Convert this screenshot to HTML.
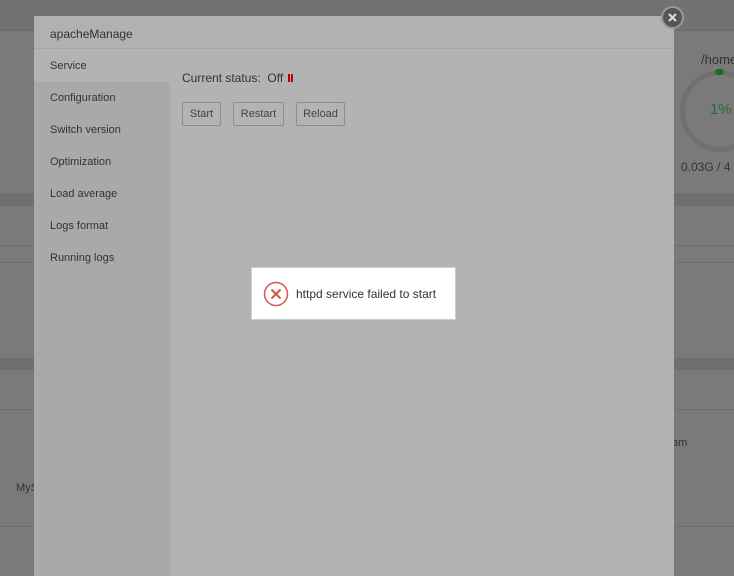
<!DOCTYPE html>
<html><head><meta charset="utf-8"><style>
*{margin:0;padding:0;box-sizing:border-box}
body{width:734px;height:568px;overflow:hidden;background:#7a7a7a;font-family:"Liberation Sans",sans-serif;position:relative}
.l{position:absolute;left:0;width:734px;height:1px;background:#6c6c6c}
.b{position:absolute;left:0;width:734px;background:#6f6f6f}
.modal{position:absolute;left:34px;top:16px;width:640px;height:560px;background:#b3b3b3}
.title{height:33px;border-bottom:1px solid #a4a4a4;font-size:12px;color:#333;padding:11px 0 0 16px;background:#b1b1b1}
.side{position:absolute;left:0;top:34px;width:136px;bottom:0;background:#a9a9a9}
.side div{height:32px;line-height:33px;padding-left:16px;font-size:11px;color:#333}
.side div.on{background:#b3b3b3}
.content{position:absolute;left:148px;top:55px;font-size:12px;color:#333}
.btn{position:absolute;top:86px;height:24px;border:1px solid #8d8d8d;border-radius:2px;font-size:11px;color:#444;line-height:22px;text-align:center}
.close{position:absolute;left:661px;top:6px;width:23px;height:23px;border-radius:50%;background:#555;border:2px solid #999}
.toast{position:absolute;left:251px;top:267px;width:205px;height:53px;background:#fff;border:1px solid #ccc}
</style></head><body>
<div class="b" style="top:0;height:30px;background:#727272"></div>
<div class="l" style="top:30px"></div>
<div class="b" style="top:193px;height:13px"></div>
<div class="l" style="top:245px"></div>
<div class="l" style="top:262px"></div>
<div class="b" style="top:358px;height:12px"></div>
<div class="l" style="top:409px"></div>
<div class="l" style="top:526px"></div>
<div style="position:absolute;left:701px;top:52px;font-size:13px;color:#333">/home</div>
<div style="position:absolute;left:680px;top:70px;width:80px;height:82px;border-radius:50%;border:5px solid #707070"></div>
<div style="position:absolute;left:715px;top:69px;width:9px;height:6px;border-radius:3px;background:#1a6e2a"></div>
<div style="position:absolute;left:710px;top:101px;font-size:15px;color:#1e6e2e">1%</div>
<div style="position:absolute;left:681px;top:160px;font-size:12px;color:#333">0.03G / 4</div>
<div style="position:absolute;left:672px;top:437px;font-size:11px;color:#333">am</div>
<div style="position:absolute;left:16px;top:482px;font-size:11px;color:#333">MyS</div>
<div class="modal">
<div class="title">apacheManage</div>
<div class="side">
<div class="on">Service</div><div>Configuration</div><div>Switch version</div><div>Optimization</div><div>Load average</div><div>Logs format</div><div>Running logs</div>
</div>
<div class="content">Current status:&nbsp; Off <span style="display:inline-block;width:2px;height:8px;background:#b00;margin-left:2px"></span><span style="display:inline-block;width:2px;height:8px;background:#b00;margin-left:1px"></span></div>
<div class="btn" style="left:148px;width:39px">Start</div>
<div class="btn" style="left:199px;width:51px">Restart</div>
<div class="btn" style="left:262px;width:49px">Reload</div>
</div>
<div class="close"><svg width="19" height="19" viewBox="0 0 19 19"><path d="M6 6L13 13M13 6L6 13" stroke="#ddd" stroke-width="2"/></svg></div>
<div class="toast">
<svg style="position:absolute;left:11px;top:13px" width="26" height="26" viewBox="0 0 26 26"><circle cx="13" cy="13" r="11.5" fill="none" stroke="#d9534f" stroke-width="1.5"/><path d="M8.5 8.5L17.5 17.5M17.5 8.5L8.5 17.5" stroke="#d9534f" stroke-width="2"/></svg>
<div style="position:absolute;left:44px;top:19px;font-size:12px;color:#333">httpd service failed to start</div>
</div>
</body></html>
